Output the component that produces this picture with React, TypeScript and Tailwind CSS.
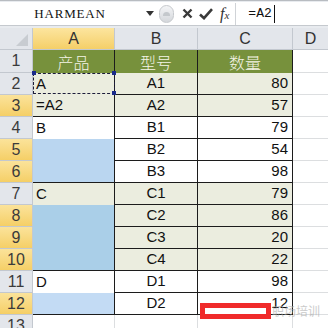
import React from "react";

type Row = {
  n: number;
  sel: boolean;
  a: string;
  aBg: string;
  aLine: boolean;
  b: string;
  c: string;
  bg: string;
};

const BEIGE = "bg-[#ebeddf]";
const WHITE = "bg-white";

const rows: Row[] = [
  { n: 2, sel: false, a: "A", aBg: BEIGE, aLine: false, b: "A1", c: "80", bg: BEIGE },
  { n: 3, sel: true, a: "=A2", aBg: BEIGE, aLine: true, b: "A2", c: "57", bg: BEIGE },
  { n: 4, sel: false, a: "B", aBg: WHITE, aLine: false, b: "B1", c: "79", bg: WHITE },
  { n: 5, sel: true, a: "", aBg: "bg-[#bad6f0]", aLine: false, b: "B2", c: "54", bg: WHITE },
  { n: 6, sel: true, a: "", aBg: "bg-[#bad6f0]", aLine: true, b: "B3", c: "98", bg: WHITE },
  { n: 7, sel: false, a: "C", aBg: BEIGE, aLine: false, b: "C1", c: "79", bg: BEIGE },
  { n: 8, sel: true, a: "", aBg: "bg-[#aacfe8]", aLine: false, b: "C2", c: "86", bg: BEIGE },
  { n: 9, sel: true, a: "", aBg: "bg-[#aacfe8]", aLine: false, b: "C3", c: "20", bg: BEIGE },
  { n: 10, sel: true, a: "", aBg: "bg-[#aacfe8]", aLine: true, b: "C4", c: "22", bg: BEIGE },
  { n: 11, sel: false, a: "D", aBg: WHITE, aLine: false, b: "D1", c: "98", bg: WHITE },
  { n: 12, sel: true, a: "", aBg: "bg-[#c3dbf4]", aLine: true, b: "D2", c: "12", bg: WHITE },
];

function RowHead({ n, sel, h }: { n: number | string; sel: boolean; h: string }) {
  return (
    <div
      className={`${h} w-[33px] shrink-0 flex items-center justify-center border-r border-b border-[#c3c8cf] text-[16px] text-[#3b3b3b] ${
        sel ? "bg-gradient-to-b from-[#fbe39a] to-[#f5cf66]" : "bg-[#e3e6eb]"
      }`}
    >
      {n}
    </div>
  );
}

export default function App() {
  return (
    <div className="relative w-[328px] h-[328px] overflow-hidden bg-white font-['Liberation_Sans',Arial,sans-serif]">
      {/* formula bar */}
      <div className="h-[28px] bg-[#e8ebef] border-t border-[#b8bcc1] pt-[1px]">
        <div className="h-[24px] bg-white border-b border-[#c5c9ce] flex items-center">
          <div className="w-[140px] text-center font-['Liberation_Serif',serif] text-[13px] text-[#111] tracking-[0.8px]">
            HARMEAN
          </div>
          <svg width="8" height="5" viewBox="0 0 8 5" className="ml-[6px]">
            <path d="M0 0 H8 L4 5 Z" fill="#333" />
          </svg>
          <div className="ml-[5px] w-[15px] h-[18px] rounded-full bg-gradient-to-b from-[#f4f5f7] to-[#d4d7db] border border-[#c6c9cd] flex items-center justify-center">
            <div className="w-[7px] h-[4px] rounded-t-full bg-[#c4c8cc]" />
          </div>
          <svg width="11" height="11" viewBox="0 0 11 11" className="ml-[8px]">
            <path d="M1.5 1.5 L9.5 9.5 M9.5 1.5 L1.5 9.5" stroke="#3a3a3a" strokeWidth="2.4" />
          </svg>
          <svg width="14" height="12" viewBox="0 0 14 12" className="ml-[6px]">
            <path d="M1 6.5 L5 10.2 L13 1.2" stroke="#3a3a3a" strokeWidth="2.6" fill="none" />
          </svg>
          <div className="ml-[7px] font-['Liberation_Serif',serif] italic text-[#333] leading-none">
            <span className="text-[16px]">f</span>
            <span className="text-[11px]">x</span>
          </div>
          <div className="ml-[6px] w-px h-[22px] bg-[#d0d3d7]" />
          <div className="ml-[12px] font-['Liberation_Mono',monospace] text-[13px] text-[#111]">=A2</div>
          <div className="ml-[2px] w-px h-[18px] bg-[#111]" />
        </div>
      </div>

      {/* column headers */}
      <div className="flex h-[22px] text-[16px] text-[#333]">
        <div className="relative w-[33px] shrink-0 bg-[#e3e6eb] border-r border-b border-[#c3c8cf]">
          <svg width="12" height="12" viewBox="0 0 12 12" className="absolute right-[4px] bottom-[3px]">
            <path d="M12 0 V12 H0 Z" fill="#c8ccd1" />
          </svg>
        </div>
        <div className="w-[82px] shrink-0 flex items-center justify-center bg-gradient-to-b from-[#fce59e] to-[#f5cf67] border-r border-b border-[#c3c8cf]">
          A
        </div>
        <div className="w-[83px] shrink-0 flex items-center justify-center bg-[#e3e6eb] border-r border-b border-[#c3c8cf]">
          B
        </div>
        <div className="w-[95px] shrink-0 flex items-center justify-center bg-[#e3e6eb] border-r border-b border-[#c3c8cf]">
          C
        </div>
        <div className="flex-1 flex items-center justify-center bg-[#e3e6eb] border-b border-[#c3c8cf]">D</div>
      </div>

      {/* row 1 */}
      <div className="flex h-[23px]">
        <RowHead n={1} sel={false} h="h-[23px]" />
        <div className="w-[82px] shrink-0 flex items-center justify-center bg-[#77913c] border-r border-[#1c1c1c] text-[16px] text-[#f4f4e6] font-['Noto_Sans_CJK_SC',sans-serif] font-light">
          产品
        </div>
        <div className="w-[83px] shrink-0 flex items-center justify-center bg-[#77913c] border-r border-[#1c1c1c] text-[16px] text-[#f4f4e6] font-['Noto_Sans_CJK_SC',sans-serif] font-light">
          型号
        </div>
        <div className="w-[95px] shrink-0 flex items-center justify-center bg-[#77913c] border-r border-[#1c1c1c] text-[16px] text-[#f4f4e6] font-['Noto_Sans_CJK_SC',sans-serif] font-light">
          数量
        </div>
        <div className="flex-1 border-b border-[#dcdee0]" />
      </div>

      {/* data rows */}
      {rows.map((r) => (
        <div key={r.n} className="relative flex h-[22px] text-[15px] text-[#111]">
          <RowHead n={r.n} sel={r.sel} h="h-[22px]" />
          <div
            className={`w-[82px] shrink-0 flex items-center pl-[3px] border-r border-[#1c1c1c] ${r.aBg} ${
              r.aLine ? "border-b" : ""
            }`}
          >
            {r.a}
          </div>
          <div className={`w-[83px] shrink-0 flex items-center justify-center border-r border-b border-[#1c1c1c] ${r.bg}`}>
            {r.b}
          </div>
          <div className={`w-[95px] shrink-0 flex items-center justify-end pr-[4px] border-r border-b border-[#1c1c1c] ${r.bg}`}>
            {r.c}
          </div>
          <div className="flex-1 border-b border-[#dcdee0]" />
          {r.n === 2 && (
            <>
              <div className="absolute left-[33px] top-0 w-[82px] h-[21px] border border-dashed border-[#1c1c3a]" />
              <div className="absolute left-[32px] top-[-2px] w-[4px] h-[4px] bg-[#1a2a8a]" />
              <div className="absolute left-[112px] top-[-2px] w-[4px] h-[4px] bg-[#1a2a8a]" />
              <div className="absolute left-[112px] top-[18px] w-[4px] h-[4px] bg-[#1a2a8a]" />
            </>
          )}
        </div>
      ))}

      {/* row 13 */}
      <div className="flex h-[22px]">
        <RowHead n={13} sel={false} h="h-[22px]" />
        <div className="w-[82px] shrink-0 border-r border-[#dcdee0]" />
        <div className="w-[83px] shrink-0 border-r border-[#dcdee0]" />
        <div className="w-[95px] shrink-0 border-r border-[#dcdee0]" />
        <div className="flex-1" />
      </div>

      {/* overlay mark + watermark */}
      <div className="absolute left-[200px] top-[303px] w-[71px] h-[16px] border-[5px] border-[#f02b2b] bg-white" />
      <div className="absolute left-[272px] top-[302px] text-[12px] text-[#a8a8a8] opacity-60 font-['Noto_Sans_CJK_SC',sans-serif]">
        职场培训
      </div>
    </div>
  );
}
